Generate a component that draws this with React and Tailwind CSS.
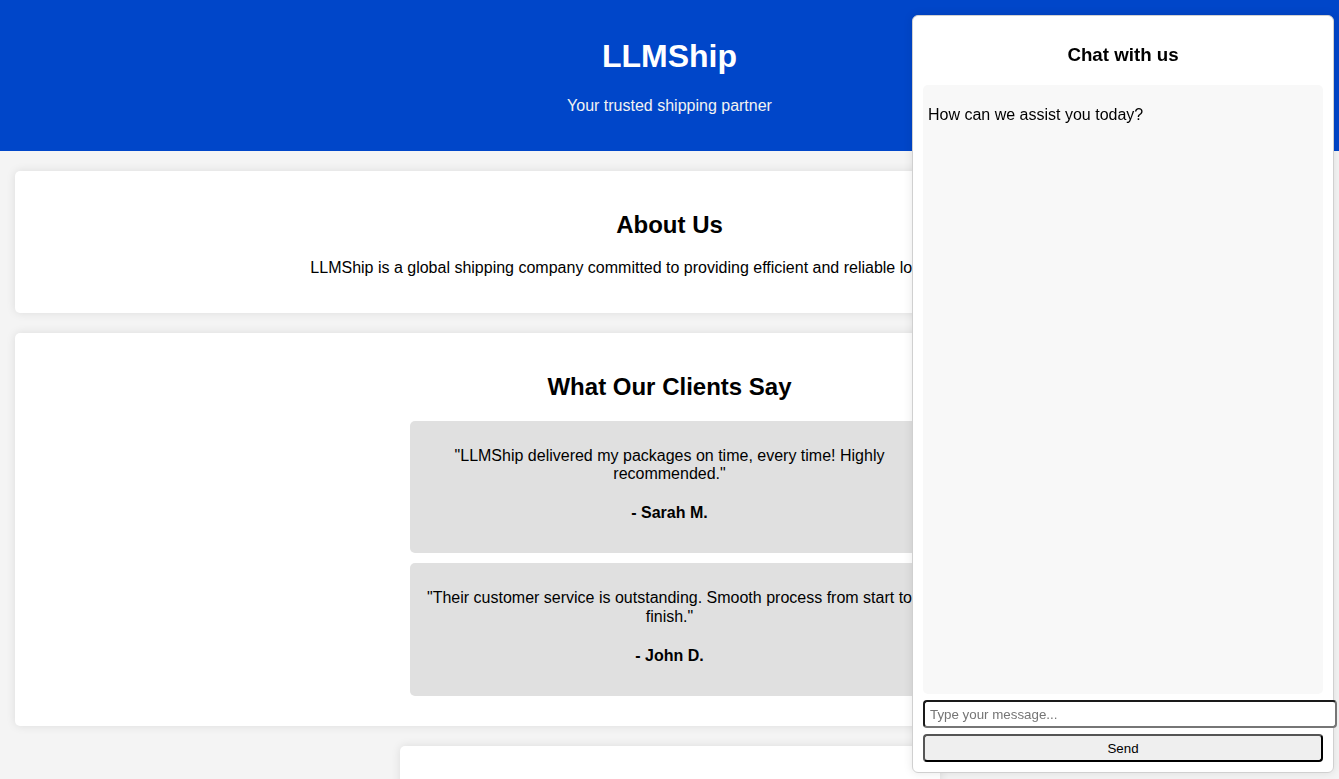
export default function App() {
  const font = { fontFamily: '"Liberation Sans", Arial, sans-serif' };
  return (
    <div className="min-h-screen bg-[#f4f4f4] text-black leading-[normal] font-['Liberation_Sans',Arial,sans-serif]">
      <header className="bg-[#0046c9] text-white text-center pt-[38px] pb-[36px]">
        <h1 className="text-[32px] font-bold leading-[37px]">LLMShip</h1>
        <p className="mt-[22px] text-[16px] leading-[18px] text-[#f2f2f2]">Your trusted shipping partner</p>
      </header>

      <main className="px-[15px] pt-[20px] pb-[20px] flex flex-col gap-[20px]">
        <section className="bg-white rounded-[5px] shadow-[0_0_10px_rgba(0,0,0,0.1)] p-[20px] text-center">
          <h2 className="text-[24px] font-bold leading-[27.6px] mt-[20px]">About Us</h2>
          <p className="text-[16px] leading-[18.4px] mt-[20px] mb-[16px]">
            LLMShip is a global shipping company committed to providing efficient and reliable logistics solutions.
          </p>
        </section>

        <section className="bg-white rounded-[5px] shadow-[0_0_10px_rgba(0,0,0,0.1)] p-[20px] pb-[30px] text-center">
          <h2 className="text-[24px] font-bold leading-[27.6px] mt-[20px] mb-[20px]">What Our Clients Say</h2>
          <div className="flex flex-col gap-[10px] items-center">
            <div className="w-[520px] bg-[#e0e0e0] rounded-[5px] px-[10px] pt-[26px] pb-[30.6px]">
              <p className="text-[16px] leading-[18.4px]">"LLMShip delivered my packages on time, every time! Highly recommended."</p>
              <p className="text-[16px] leading-[18.4px] font-bold mt-[21px]">- Sarah M.</p>
            </div>
            <div className="w-[520px] bg-[#e0e0e0] rounded-[5px] px-[10px] pt-[26px] pb-[30.6px]">
              <p className="text-[16px] leading-[18.4px]">"Their customer service is outstanding. Smooth process from start to finish."</p>
              <p className="text-[16px] leading-[18.4px] font-bold mt-[21px]">- John D.</p>
            </div>
          </div>
        </section>

        <section className="self-center w-[540px] h-[180px] bg-white rounded-[5px] shadow-[0_0_10px_rgba(0,0,0,0.1)] p-[20px]" />
      </main>

      <div
        style={font}
        className="fixed top-[15px] right-[5px] w-[422px] h-[758px] bg-white border border-[#d0d0d0] rounded-[6px] shadow-[0_0_10px_rgba(0,0,0,0.1)] p-[10px] flex flex-col"
      >
        <h3 className="text-[18.72px] font-bold leading-[21.5px] text-center mt-[17.7px] mb-[19.7px]">Chat with us</h3>
        <div className="flex-1 bg-[#f8f8f8] rounded-[5px] px-[5px] pt-[21px]">
          <p className="text-[16px] leading-[18.4px]">How can we assist you today?</p>
        </div>
        <input
          type="text"
          placeholder="Type your message..."
          className="mt-[6.4px] w-[414px] h-[28px] px-[5px] text-[13.33px] rounded-[4px] border-2 border-solid border-t-[#1a1a1a] border-l-[#1a1a1a] border-r-[#767676] border-b-[#767676] bg-white placeholder:text-[#757575] outline-none"
        />
        <button className="mt-[6px] w-[400px] h-[28px] text-[13.33px] bg-[#efefef] rounded-[4px] border-2 border-solid border-t-[#555] border-l-[#555] border-r-[#000] border-b-[#000] text-black">
          Send
        </button>
      </div>
    </div>
  );
}
